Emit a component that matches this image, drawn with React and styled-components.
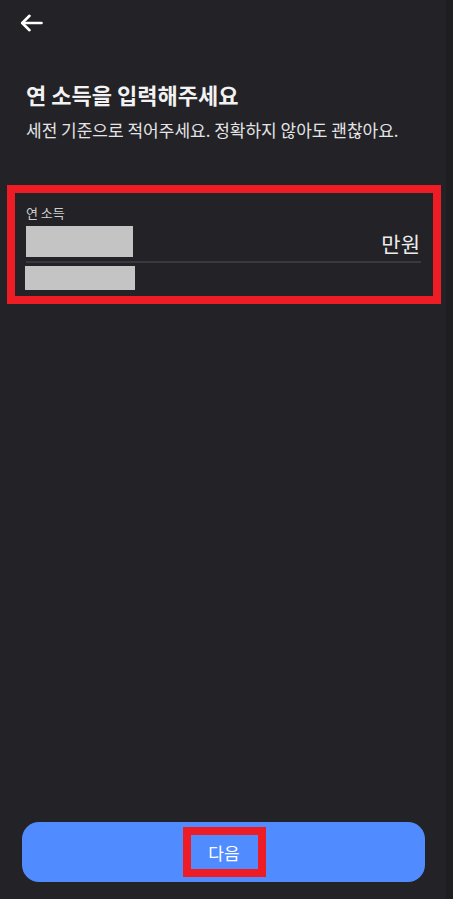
import React from 'react'
import styled, {createGlobalStyle} from 'styled-components'

const GlobalStyle = createGlobalStyle`
    html, body {
        margin: 0;
        padding: 0;
        background: #222227;
    }
    * {
        box-sizing: border-box;
    }
    body {
        font-family: "Noto Sans CJK KR", "Noto Sans", sans-serif;
    }
`

const Screen = styled.div`
    display: flex;
    width: 100%;
    height: 100vh;
    background: #222227;
`

const Main = styled.div`
    flex: 1;
    display: flex;
    flex-direction: column;
    min-width: 0;
`

const Gutter = styled.div`
    width: 7px;
    background: #1e1e22;
`

const TopBar = styled.div`
    display: flex;
    align-items: center;
    height: 46px;
    padding: 0 0 0 20px;
`

const BackButton = styled.button`
    display: flex;
    padding: 0;
    margin: 0;
    border: none;
    background: none;
    color: #ffffff;
    cursor: pointer;
    margin-top: -1px;
`

const Heading = styled.div`
    padding: 33px 0 0 26px;
`

const Title = styled.h1`
    margin: 0;
    font-size: 22px;
    line-height: 30px;
    font-weight: 700;
    color: #f2f2f2;
`

const Sub = styled.p`
    margin: 9px 0 0;
    font-size: 17px;
    line-height: 24px;
    color: #e4e4e4;
    white-space: nowrap;
`

const InputCard = styled.div`
    margin: 43px 5px 0 7px;
    border: 8px solid #ee1c25;
    padding: 11px 12px 6px 11px;
`

const Label = styled.div`
    font-size: 13px;
    line-height: 18px;
    color: #d0d0d0;
`

const FieldRow = styled.div`
    display: flex;
    align-items: flex-end;
    justify-content: space-between;
    margin-top: 4px;
    padding-bottom: 4px;
    border-bottom: 2px solid #38383e;
`

const Unit = styled.span`
    font-size: 21px;
    line-height: 28px;
    color: #ececec;
    margin-right: 1px;
`

const Masked = styled.div`
    width: ${p => p.$w}px;
    height: ${p => p.$h}px;
    background: #c4c4c4;
    margin-left: ${p => p.$ml || 0}px;
`

const HelperRow = styled.div`
    margin-top: 3px;
`

const Spacer = styled.div`
    flex: 1;
`

const Footer = styled.div`
    padding: 0 21px 17px 22px;
`

const NextButton = styled.button`
    width: 100%;
    height: 60px;
    border: none;
    border-radius: 17px;
    background: #508bff;
    display: flex;
    align-items: center;
    justify-content: center;
    cursor: pointer;
    padding: 0;
`

const NextLabel = styled.span`
    display: flex;
    align-items: center;
    justify-content: center;
    width: 83px;
    height: 50px;
    border: 8px solid #ee1c25;
    font-family: "Noto Sans CJK KR", sans-serif;
    font-size: 17px;
    color: #ffffff;
    margin-left: 1px;
`

function ArrowLeft() {
    return (
        <svg width="23" height="18" viewBox="0 0 23 18" fill="none">
            <path d="M21.5 9H2.5" stroke="currentColor" strokeWidth="2.6" strokeLinecap="round" />
            <path d="M9.5 1.8L2.2 9L9.5 16.2" stroke="currentColor" strokeWidth="2.6" strokeLinecap="round" strokeLinejoin="round" />
        </svg>
    )
}

export default function App() {
    return <>
        <GlobalStyle />
        <Screen>
            <Main>
                <TopBar>
                    <BackButton aria-label="뒤로">
                        <ArrowLeft />
                    </BackButton>
                </TopBar>
                <Heading>
                    <Title>연 소득을 입력해주세요</Title>
                    <Sub>세전 기준으로 적어주세요. 정확하지 않아도 괜찮아요.</Sub>
                </Heading>
                <InputCard>
                    <Label>연 소득</Label>
                    <FieldRow>
                        <Masked $w={107} $h={31} />
                        <Unit>만원</Unit>
                    </FieldRow>
                    <HelperRow>
                        <Masked $w={110} $h={24} $ml={-1} />
                    </HelperRow>
                </InputCard>
                <Spacer />
                <Footer>
                    <NextButton>
                        <NextLabel>다음</NextLabel>
                    </NextButton>
                </Footer>
            </Main>
            <Gutter />
        </Screen>
    </>
}
